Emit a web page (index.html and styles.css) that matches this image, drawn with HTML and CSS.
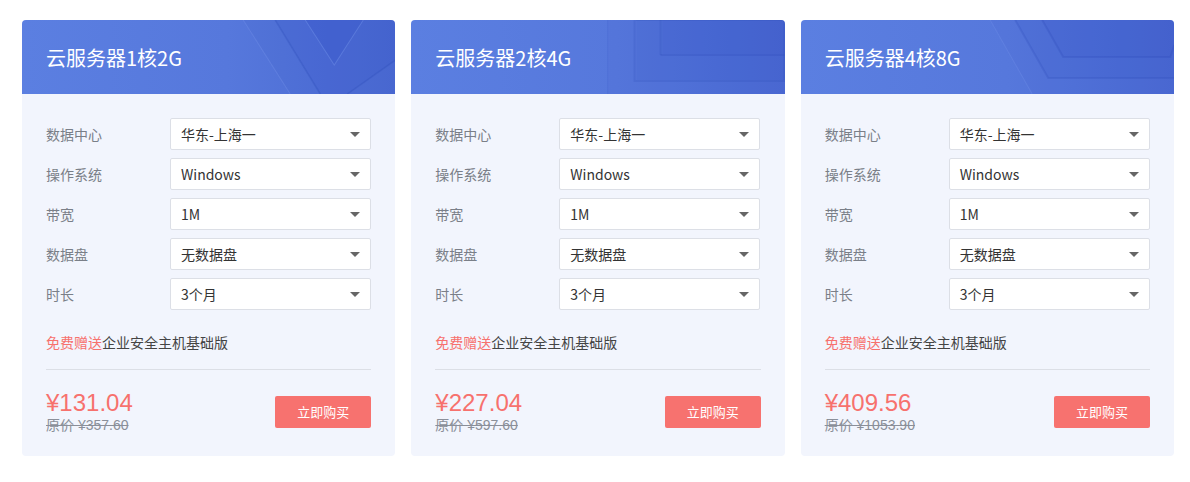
FILE: index.html
```html
<!DOCTYPE html>
<html lang="zh-CN">
<head>
<meta charset="utf-8">
<title>云服务器</title>
<link rel="stylesheet" href="styles.css">
</head>
<body>
<div class="cards">
  <div class="card">
    <div class="head">
      <svg class="deco" viewBox="0 0 373 74" preserveAspectRatio="none">
        <polygon points="221,0 373,0 373,74 268,74" fill="rgba(60,90,200,0.10)"/>
        <line x1="221" y1="0" x2="268" y2="74" stroke="rgba(120,150,235,0.35)" stroke-width="1"/>
        <polygon points="253,0 373,0 373,40 325,74 298,74" fill="rgba(50,80,195,0.14)"/>
        <line x1="253" y1="0" x2="298" y2="74" stroke="rgba(40,70,180,0.25)" stroke-width="1.5"/>
        <line x1="373" y1="40" x2="325" y2="74" stroke="rgba(40,70,180,0.25)" stroke-width="1.5"/>
        <polygon points="283,0 341,0 312,45" fill="rgba(60,90,205,0.45)"/>
        <polyline points="283,0 312,45 341,0" fill="none" stroke="rgba(130,160,240,0.35)" stroke-width="1"/>
      </svg>
      <h2 class="title">云服务器1核2G</h2>
    </div>
    <div class="body">
      <div class="row"><span class="label">数据中心</span><div class="select">华东-上海一<i class="arrow"></i></div></div>
      <div class="row"><span class="label">操作系统</span><div class="select">Windows<i class="arrow"></i></div></div>
      <div class="row"><span class="label">带宽</span><div class="select">1M<i class="arrow"></i></div></div>
      <div class="row"><span class="label">数据盘</span><div class="select">无数据盘<i class="arrow"></i></div></div>
      <div class="row"><span class="label">时长</span><div class="select">3个月<i class="arrow"></i></div></div>
      <p class="gift"><span class="red">免费赠送</span>企业安全主机基础版</p>
      <div class="foot">
        <div class="prices"><div class="price">¥131.04</div><div class="orig">原价 ¥357.60</div></div>
        <button class="buy">立即购买</button>
      </div>
    </div>
  </div>

  <div class="card">
    <div class="head">
      <svg class="deco" viewBox="0 0 374 74" preserveAspectRatio="none">
        <rect x="197" y="0" width="177" height="74" fill="rgba(60,90,200,0.08)"/>
        <line x1="197" y1="0" x2="197" y2="74" stroke="rgba(50,80,190,0.15)"/>
        <rect x="226" y="0" width="148" height="60" fill="rgba(50,80,195,0.12)"/>
        <rect x="224" y="0" width="150" height="61" fill="none" stroke="rgba(40,70,180,0.18)" stroke-width="2"/>
        <rect x="252" y="0" width="122" height="34" fill="rgba(55,85,200,0.14)"/>
        <line x1="250" y1="35" x2="374" y2="35" stroke="rgba(40,70,180,0.22)" stroke-width="2"/>
        <line x1="250" y1="0" x2="250" y2="35" stroke="rgba(40,70,180,0.18)" stroke-width="2"/>
      </svg>
      <h2 class="title">云服务器2核4G</h2>
    </div>
    <div class="body">
      <div class="row"><span class="label">数据中心</span><div class="select">华东-上海一<i class="arrow"></i></div></div>
      <div class="row"><span class="label">操作系统</span><div class="select">Windows<i class="arrow"></i></div></div>
      <div class="row"><span class="label">带宽</span><div class="select">1M<i class="arrow"></i></div></div>
      <div class="row"><span class="label">数据盘</span><div class="select">无数据盘<i class="arrow"></i></div></div>
      <div class="row"><span class="label">时长</span><div class="select">3个月<i class="arrow"></i></div></div>
      <p class="gift"><span class="red">免费赠送</span>企业安全主机基础版</p>
      <div class="foot">
        <div class="prices"><div class="price">¥227.04</div><div class="orig">原价 ¥597.60</div></div>
        <button class="buy">立即购买</button>
      </div>
    </div>
  </div>

  <div class="card">
    <div class="head">
      <svg class="deco" viewBox="0 0 373 74" preserveAspectRatio="none">
        <polygon points="189,0 373,0 373,74 231,74" fill="rgba(60,90,200,0.08)"/>
        <line x1="189" y1="0" x2="231" y2="74" stroke="rgba(120,150,235,0.3)"/>
        <polygon points="214,0 373,0 373,58 247,58" fill="rgba(50,80,195,0.12)"/>
        <polyline points="214,0 247,58 373,58" fill="none" stroke="rgba(40,70,180,0.2)" stroke-width="2"/>
        <polygon points="241,0 373,0 373,25 369,37 262,37" fill="rgba(55,85,200,0.14)"/>
        <polyline points="241,0 262,37 369,37 373,25" fill="none" stroke="rgba(40,70,180,0.22)" stroke-width="2"/>
      </svg>
      <h2 class="title">云服务器4核8G</h2>
    </div>
    <div class="body">
      <div class="row"><span class="label">数据中心</span><div class="select">华东-上海一<i class="arrow"></i></div></div>
      <div class="row"><span class="label">操作系统</span><div class="select">Windows<i class="arrow"></i></div></div>
      <div class="row"><span class="label">带宽</span><div class="select">1M<i class="arrow"></i></div></div>
      <div class="row"><span class="label">数据盘</span><div class="select">无数据盘<i class="arrow"></i></div></div>
      <div class="row"><span class="label">时长</span><div class="select">3个月<i class="arrow"></i></div></div>
      <p class="gift"><span class="red">免费赠送</span>企业安全主机基础版</p>
      <div class="foot">
        <div class="prices"><div class="price">¥409.56</div><div class="orig">原价 ¥1053.90</div></div>
        <button class="buy">立即购买</button>
      </div>
    </div>
  </div>
</div>
</body>
</html>
```
FILE: styles.css
```css
* { box-sizing: border-box; }
html, body { margin: 0; padding: 0; background: #fff; }
body {
  font-family: "Noto Sans CJK SC", "Liberation Sans", sans-serif;
  padding: 20px 0 0 22px;
}
.cards {
  display: flex;
  gap: 16px;
  width: 1152px;
}
.card {
  flex: 1;
  height: 436px;
  background: #f2f5fd;
  border-radius: 4px;
  overflow: hidden;
}
.head {
  position: relative;
  height: 74px;
  background: linear-gradient(90deg, #5b7fe1 0%, #5678dc 55%, #4a69d2 100%);
  display: flex;
  align-items: center;
  padding-left: 24px;
}
.deco {
  position: absolute;
  left: 0; top: 0;
  width: 100%; height: 100%;
}
.title {
  position: relative;
  margin: 0;
  color: #fff;
  font-size: 20px;
  font-weight: 400;
}
.body {
  padding: 24px 24px 0 24px;
}
.row {
  display: flex;
  align-items: center;
  height: 32px;
  margin-bottom: 8px;
}
.label {
  width: 124px;
  font-size: 14px;
  color: #7a7f88;
}
.select {
  position: relative;
  width: 201px;
  height: 32px;
  background: #fff;
  border: 1px solid #dcdfe6;
  border-radius: 2px;
  font-size: 14px;
  color: #333;
  line-height: 30px;
  padding-left: 10px;
}
.arrow {
  position: absolute;
  right: 10px;
  top: 13px;
  width: 0; height: 0;
  border-left: 5px solid transparent;
  border-right: 5px solid transparent;
  border-top: 5px solid #666;
}
.gift {
  margin: 22px 0 0 0;
  font-size: 14px;
  line-height: 20px;
  color: #444;
  padding-bottom: 17px;
  border-bottom: 1px solid #dcdfe6;
}
.red { color: #f7716d; }
.foot {
  display: flex;
  align-items: center;
  justify-content: space-between;
  margin-top: 19px;
}
.price {
  font-family: "Liberation Sans", "Noto Sans CJK SC", sans-serif;
  font-size: 24px;
  line-height: 28px;
  color: #f7716d;
}
.orig {
  font-family: "Liberation Sans", "Noto Sans CJK SC", sans-serif;
  font-size: 14px;
  line-height: 17px;
  color: #8a8f99;
  text-decoration: line-through;
}
.buy {
  width: 96px;
  height: 32px;
  border: none;
  border-radius: 2px;
  background: #f7726f;
  color: #fff;
  font-family: "Noto Sans CJK SC", sans-serif;
  font-size: 13px;
  padding: 0;
}
```
